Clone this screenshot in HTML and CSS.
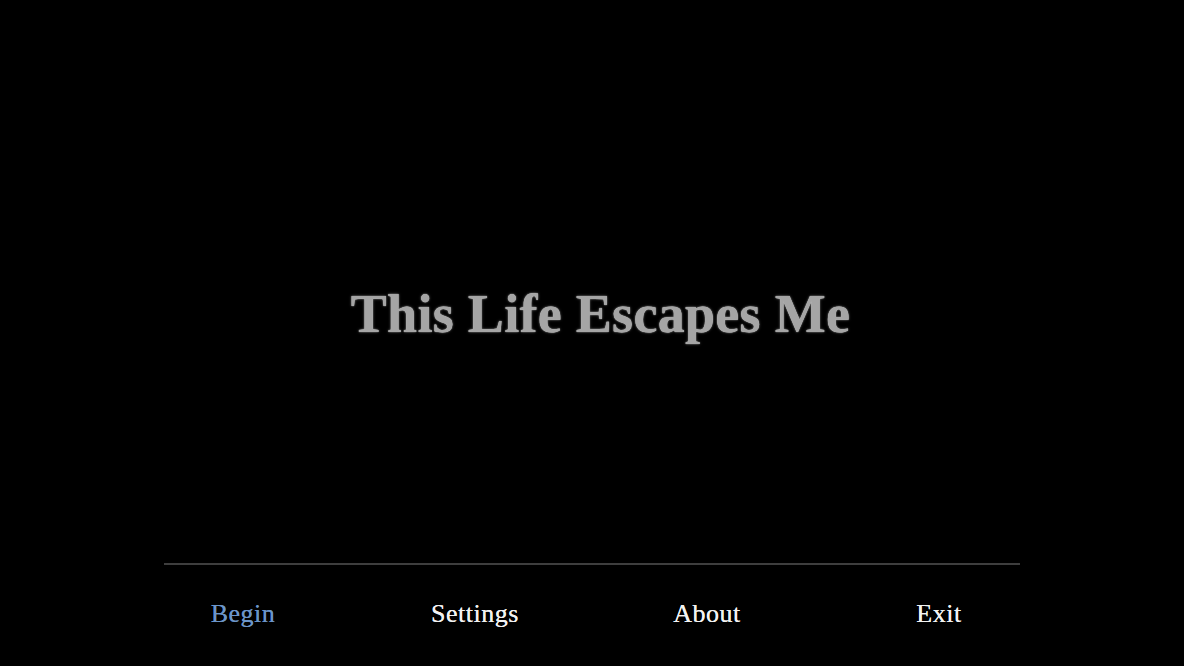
FILE: index.html
```html
<!DOCTYPE html>
<html>
<head>
<meta charset="utf-8">
<link rel="stylesheet" href="styles.css">
</head>
<body>
<div class="screen">
  <div class="title-area">
    <h1 class="title">This Life Escapes Me</h1>
  </div>
  <div class="divider"></div>
  <nav class="menu">
    <span class="item active">Begin</span>
    <span class="item">Settings</span>
    <span class="item">About</span>
    <span class="item">Exit</span>
  </nav>
</div>
</body>
</html>
```
FILE: styles.css
```css
html, body {
  margin: 0;
  padding: 0;
  background: #000;
}
.screen {
  width: 1184px;
  height: 666px;
  display: flex;
  flex-direction: column;
  align-items: center;
  font-family: "Liberation Serif", "DejaVu Serif", serif;
}
.title-area {
  height: 563px;
  width: 100%;
  display: flex;
  flex-direction: column;
  align-items: center;
}
.title {
  margin: 279px 0 0 17px;
  font-size: 54px;
  line-height: 70px;
  font-weight: bold;
  color: #a5a5a5;
  letter-spacing: 0.3px;
  text-shadow: 0 0 3px rgba(255,255,255,0.35), 0 0 1px #ddd;
}
.divider {
  width: 856px;
  height: 2px;
  background: #3e3e3e;
}
.menu {
  display: grid;
  grid-template-columns: repeat(4, 232px);
  margin-top: 32px;
  margin-left: -2px;
}
.item {
  text-align: center;
  font-size: 26px;
  line-height: 34px;
  color: #f2f2f2;
  letter-spacing: 0.5px;
  text-shadow: 0 0 0.6px currentColor;
}
.item.active {
  color: #6b95c9;
}
```
